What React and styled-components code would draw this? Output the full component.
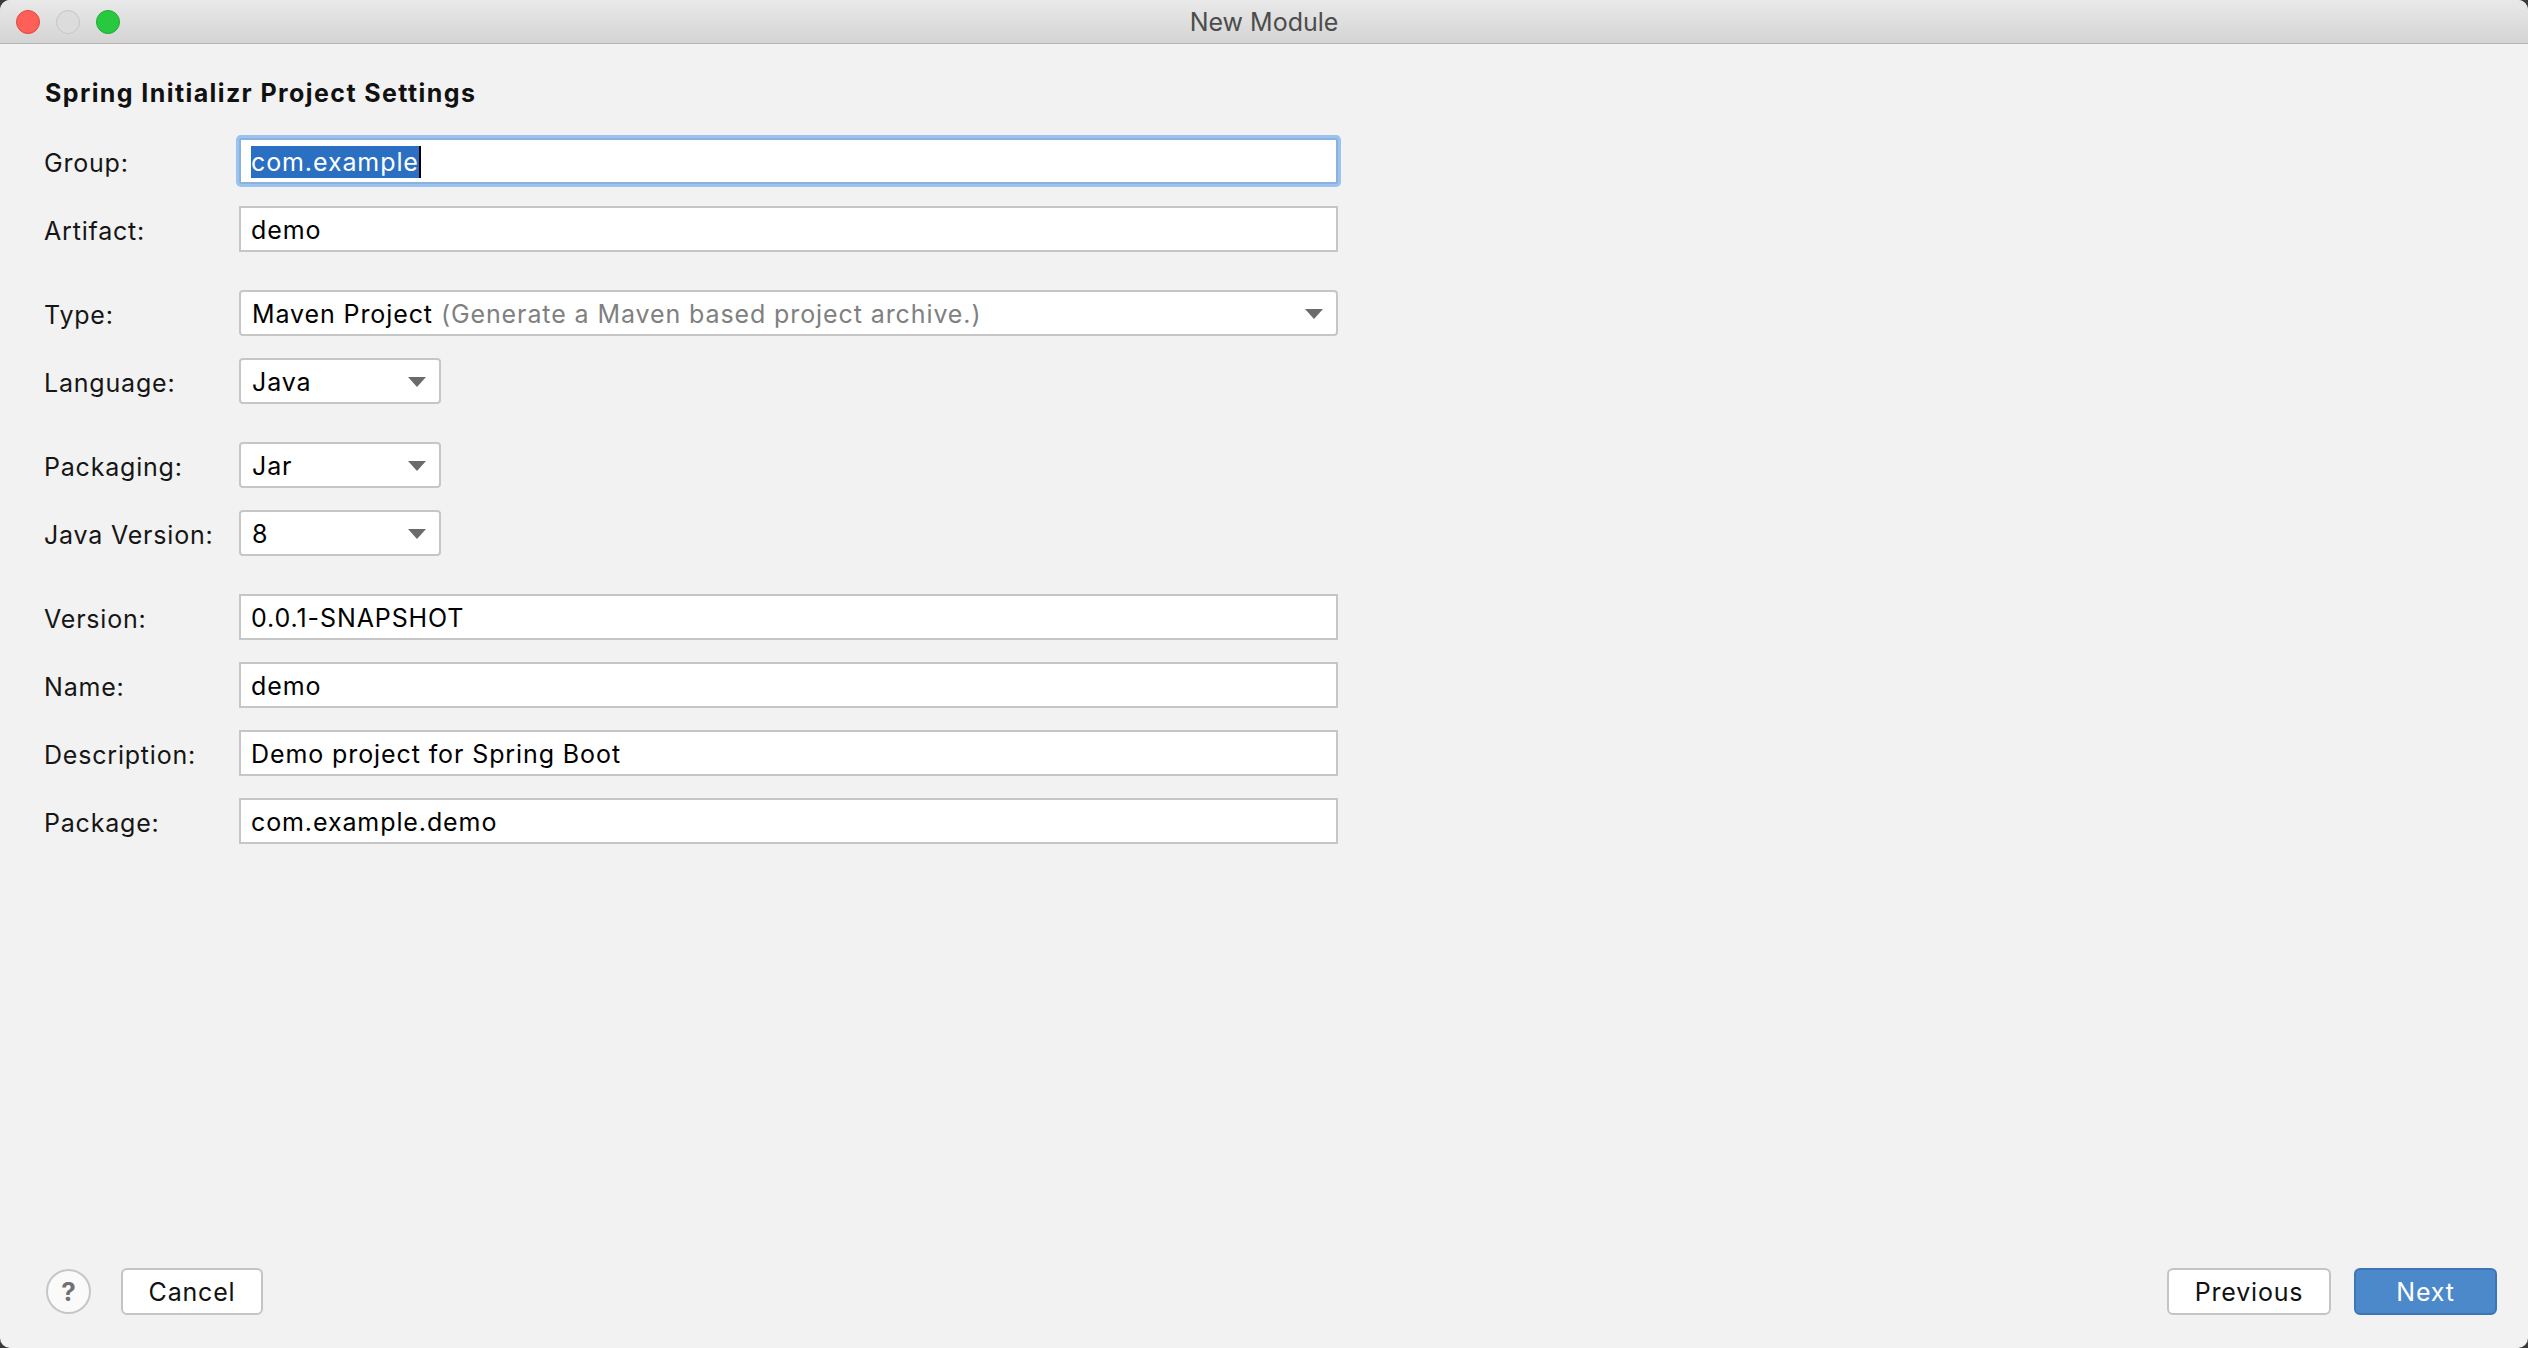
import React from 'react'
import styled, { createGlobalStyle } from 'styled-components'

const GlobalStyle = createGlobalStyle`
  html, body {
    margin: 0;
    padding: 0;
    background: #3a3a3a;
  }
  body {
    font-family: Inter, "Liberation Sans", sans-serif;
    -webkit-font-smoothing: antialiased;
  }
  * {
    box-sizing: border-box;
  }
`

const Window = styled.div`
  width: 2528px;
  height: 1348px;
  display: flex;
  flex-direction: column;
  background: #f2f2f2;
  border-radius: 10px;
  overflow: hidden;
`

const TitleBar = styled.div`
  height: 44px;
  flex-shrink: 0;
  display: grid;
  grid-template-columns: 1fr auto 1fr;
  align-items: center;
  background: linear-gradient(#e9e9e9, #d4d4d4);
  border-bottom: 1px solid #b4b4b4;
`

const Lights = styled.div`
  display: flex;
  gap: 16px;
  padding-left: 16px;
`

const Light = styled.span`
  width: 24px;
  height: 24px;
  border-radius: 50%;
  background: ${p => p.$fill};
  border: 1px solid ${p => p.$edge};
`

const Title = styled.div`
  font-size: 25px;
  color: #4c4c4c;
`

const Content = styled.div`
  flex: 1;
  display: flex;
  flex-direction: column;
  padding: 0 31px 33px 44px;
`

const Heading = styled.h1`
  margin: 34px 0 30px 1px;
  font-size: 25px;
  line-height: 30px;
  letter-spacing: 1.4px;
  font-weight: 700;
  color: #111;
`

const Form = styled.div`
  display: flex;
  flex-direction: column;
  gap: 22px;
`

const Row = styled.div`
  display: flex;
  align-items: center;
  height: 46px;
  margin-top: ${p => (p.$section ? '16px' : '0')};
`

const Label = styled.div`
  width: 195px;
  flex-shrink: 0;
  padding-top: 3px;
  font-size: 25px;
  letter-spacing: 0.8px;
  color: #161616;
`

const TextField = styled.div`
  width: 1099px;
  height: 46px;
  display: flex;
  align-items: center;
  padding: 2px 10px 0;
  background: #fff;
  border: 2px solid ${p => (p.$focused ? '#8bb1de' : '#c6c6c6')};
  border-radius: ${p => (p.$focused ? '2px' : '0')};
  box-shadow: ${p => (p.$focused ? '0 0 0 3px #9ac3f0' : 'none')};
  font-size: 25px;
  letter-spacing: 0.9px;
  color: #000;
  white-space: nowrap;
`

const Selected = styled.span`
  background: #2a6fc2;
  color: #fff;
  line-height: 32px;
`

const Caret = styled.span`
  width: 2px;
  height: 32px;
  background: #000;
`

const Combo = styled.div`
  width: ${p => p.$width}px;
  height: 46px;
  display: flex;
  align-items: center;
  justify-content: space-between;
  padding: 2px 13px 0 11px;
  background: #fff;
  border: 2px solid #c6c6c6;
  border-radius: 4px;
  font-size: 25px;
  letter-spacing: 0.9px;
  color: #000;
  white-space: nowrap;
`

const Hint = styled.span`
  color: #808080;
`

const Footer = styled.div`
  margin-top: auto;
  display: flex;
  align-items: center;
  justify-content: space-between;
`

const ButtonGroup = styled.div`
  display: flex;
  align-items: center;
  gap: ${p => p.$gap}px;
`

const HelpButton = styled.div`
  width: 45px;
  height: 45px;
  margin-left: 2px;
  border-radius: 50%;
  border: 2px solid #c6c6c6;
  background: #fafafa;
  display: flex;
  align-items: center;
  justify-content: center;
  font-size: 26px;
  font-weight: 700;
  color: #707070;
`

const Button = styled.div`
  width: ${p => p.$width}px;
  height: 47px;
  display: flex;
  align-items: center;
  justify-content: center;
  border-radius: 6px;
  font-size: 25px;
  letter-spacing: 0.8px;
  background: ${p => (p.$primary ? '#4c89ca' : '#fff')};
  border: 2px solid ${p => (p.$primary ? '#3e75b5' : '#c4c4c4')};
  color: ${p => (p.$primary ? '#fff' : '#111')};
`

const Arrow = () => (
  <svg width="18" height="10" viewBox="0 0 18 10">
    <polygon points="0,0 18,0 9,10" fill="#6b6b6b" />
  </svg>
)

const fields = [
  { label: 'Version:', value: '0.0.1-SNAPSHOT', section: true },
  { label: 'Name:', value: 'demo' },
  { label: 'Description:', value: 'Demo project for Spring Boot' },
  { label: 'Package:', value: 'com.example.demo' },
]

export default function App() {
  return (
    <>
      <GlobalStyle />
      <Window>
        <TitleBar>
          <Lights>
            <Light $fill="#fe5f57" $edge="#e0443e" />
            <Light $fill="#dcdcdc" $edge="#c6c6c6" />
            <Light $fill="#28c840" $edge="#1eaa30" />
          </Lights>
          <Title>New Module</Title>
          <div />
        </TitleBar>
        <Content>
          <Heading>Spring Initializr Project Settings</Heading>
          <Form>
            <Row>
              <Label>Group:</Label>
              <TextField $focused>
                <Selected>com.example</Selected>
                <Caret />
              </TextField>
            </Row>
            <Row>
              <Label>Artifact:</Label>
              <TextField>demo</TextField>
            </Row>
            <Row $section>
              <Label>Type:</Label>
              <Combo $width={1099}>
                <span>
                  Maven Project <Hint>(Generate a Maven based project archive.)</Hint>
                </span>
                <Arrow />
              </Combo>
            </Row>
            <Row>
              <Label>Language:</Label>
              <Combo $width={202}>
                <span>Java</span>
                <Arrow />
              </Combo>
            </Row>
            <Row $section>
              <Label>Packaging:</Label>
              <Combo $width={202}>
                <span>Jar</span>
                <Arrow />
              </Combo>
            </Row>
            <Row>
              <Label>Java Version:</Label>
              <Combo $width={202}>
                <span>8</span>
                <Arrow />
              </Combo>
            </Row>
            {fields.map(f => (
              <Row key={f.label} $section={f.section}>
                <Label>{f.label}</Label>
                <TextField>{f.value}</TextField>
              </Row>
            ))}
          </Form>
          <Footer>
            <ButtonGroup $gap={30}>
              <HelpButton>?</HelpButton>
              <Button $width={142}>Cancel</Button>
            </ButtonGroup>
            <ButtonGroup $gap={23}>
              <Button $width={164}>Previous</Button>
              <Button $width={143} $primary>Next</Button>
            </ButtonGroup>
          </Footer>
        </Content>
      </Window>
    </>
  )
}
